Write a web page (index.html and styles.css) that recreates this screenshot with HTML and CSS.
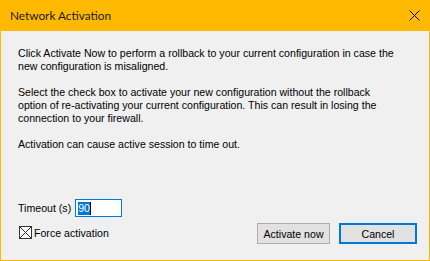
FILE: index.html
```html
<!DOCTYPE html>
<html>
<head>
<meta charset="utf-8">
<link rel="stylesheet" href="styles.css">
</head>
<body>
<div class="window">
  <div class="titlebar">
    <span class="title">Network Activation</span>
    <span class="close">
      <svg width="11" height="11" viewBox="0 0 11 11"><path d="M0.5 0.5 L10.5 10.5 M10.5 0.5 L0.5 10.5" stroke="#000" stroke-width="1" fill="none"/></svg>
    </span>
  </div>
  <div class="content">
    <p class="para">Click Activate Now to perform a rollback to your current configuration in case the<br>new configuration is misaligned.</p>
    <p class="para">Select the check box to activate your new configuration without the rollback<br>option of re-activating your current configuration. This can result in losing the<br>connection to your firewall.</p>
    <p class="para">Activation can cause active session to time out.</p>
    <div class="bottom">
      <div class="timeout-row">
        <span class="label">Timeout (s)</span>
        <div class="field"><span class="sel">90</span><span class="caret"></span></div>
      </div>
      <div class="action-row">
        <label class="check">
          <span class="box">
            <svg width="13" height="13" viewBox="0 0 13 13"><rect x="0.5" y="0.5" width="12" height="12" fill="#fff" stroke="#333"/><path d="M1 1 L12 12 M12 1 L1 12" stroke="#333" stroke-width="1"/></svg>
          </span>
          <span>Force activation</span>
        </label>
        <div class="buttons">
          <button class="btn">Activate now</button>
          <button class="btn btn-default">Cancel</button>
        </div>
      </div>
    </div>
  </div>
</div>
</body>
</html>
```
FILE: styles.css
```css
html, body {
  margin: 0;
  padding: 0;
  background: #f0f0f0;
}
.window {
  width: 430px;
  height: 261px;
  display: flex;
  flex-direction: column;
  box-sizing: border-box;
  font-family: "Liberation Sans", Arial, sans-serif;
  font-size: 10.6px;
  color: #000;
}
.titlebar {
  height: 31px;
  background: #ffb900;
  display: flex;
  align-items: center;
  justify-content: space-between;
  padding: 0 10px 0 10px;
  box-sizing: border-box;
}
.title {
  font-family: Lato, "Open Sans", sans-serif;
  font-size: 11.8px;
  color: #1a1a1a;
  margin-top: -1px;
}
.close {
  display: flex;
  width: 11px;
  height: 11px;
  margin-top: -1px;
}
.content {
  flex: 1;
  display: flex;
  flex-direction: column;
  background: #f0f0f0;
  border: 1px solid #ffb900;
  border-top: none;
  padding: 16px 12px 16px 17px;
  box-sizing: border-box;
}
.para {
  margin: 0 0 13px 0;
  line-height: 13px;
}
.bottom {
  margin-top: auto;
  display: flex;
  flex-direction: column;
  gap: 6px;
}
.timeout-row {
  display: flex;
  align-items: center;
  gap: 4px;
}
.field {
  width: 47px;
  height: 18px;
  box-sizing: border-box;
  border: 1px solid #0078d7;
  background: #fff;
  display: flex;
  align-items: center;
  padding-left: 2px;
}
.sel {
  background: #0078d7;
  color: #fff;
  line-height: 13px;
}
.caret {
  width: 1px;
  height: 13px;
  background: #000;
}
.action-row {
  display: flex;
  align-items: flex-end;
  justify-content: space-between;
}
.check {
  display: flex;
  align-items: center;
  gap: 2px;
  margin-bottom: 5px;
  margin-left: 1px;
}
.box {
  display: flex;
  width: 13px;
  height: 13px;
}
.buttons {
  display: flex;
  gap: 9px;
}
.btn {
  font-family: "Liberation Sans", Arial, sans-serif;
  font-size: 10.6px;
  color: #000;
  height: 21px;
  background: #e1e1e1;
  border: 1px solid #adadad;
  padding: 0;
  margin: 0;
  width: 73px;
  box-sizing: border-box;
}
.btn-default {
  width: 78px;
  border: 2px solid #0078d7;
}
```
